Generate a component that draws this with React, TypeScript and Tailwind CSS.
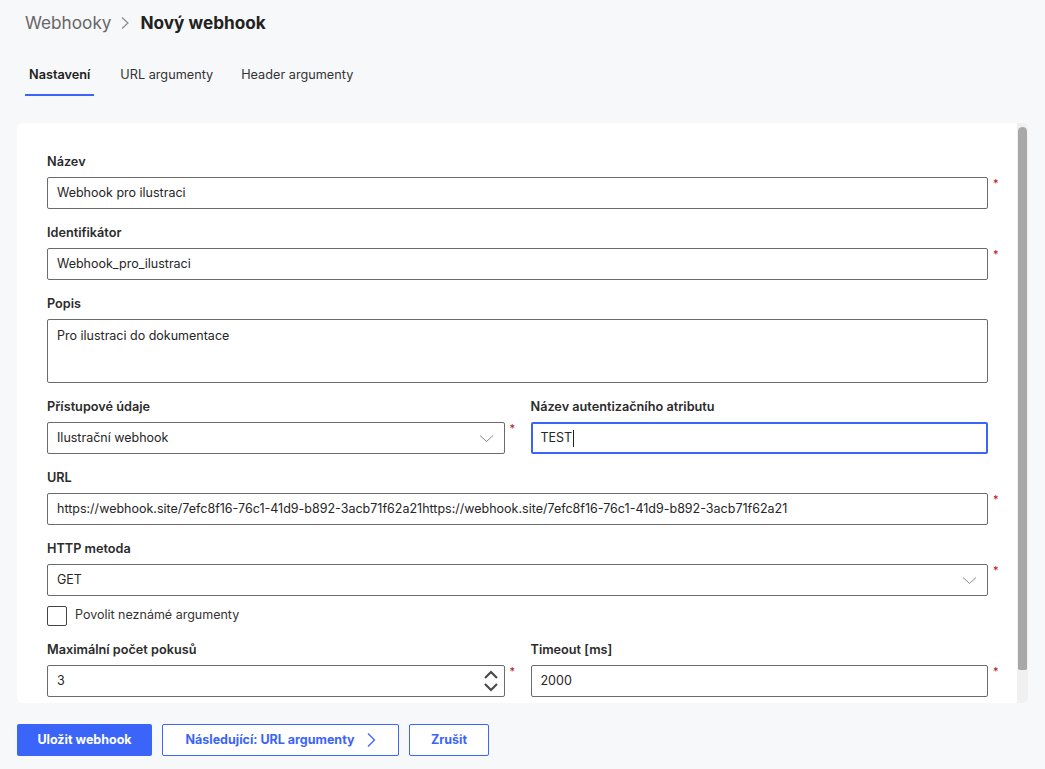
import React from "react";

const font = { fontFamily: "Inter, 'Noto Sans', sans-serif" };

function Req() {
  return (
    <span className="w-[26px] shrink-0 pl-[5px] pt-[1px] text-[11px] leading-[10px] text-[#b3101b] self-start">
      *
    </span>
  );
}

function Empty() {
  return <span className="w-[26px] shrink-0" />;
}

function Label({ children }: { children: React.ReactNode }) {
  return (
    <div className="h-4 mb-[7px] text-[12.7px] leading-4 font-semibold text-[#2b2b2b]">{children}</div>
  );
}

function ChevronDown() {
  return (
    <svg width="15" height="9" viewBox="0 0 15 9" className="shrink-0">
      <path d="M1 1.5 L7.5 7.5 L14 1.5" fill="none" stroke="#8a8a8a" strokeWidth="1" />
    </svg>
  );
}

function TextField({
  label,
  value,
  required = true,
}: {
  label: string;
  value: string;
  required?: boolean;
}) {
  return (
    <div className="flex flex-col">
      <Label>{label}</Label>
      <div className="flex">
        <div className="flex-1 h-8 border border-[#6b6b6b] rounded-[2px] flex items-center px-[9px] text-[12.5px] text-[#262626]">
          {value}
        </div>
        {required ? <Req /> : <Empty />}
      </div>
    </div>
  );
}

function SelectField({ label, value }: { label: string; value: string }) {
  return (
    <div className="flex flex-col">
      <Label>{label}</Label>
      <div className="flex">
        <div className="flex-1 h-8 border border-[#6b6b6b] rounded-[2px] flex items-center justify-between pl-[9px] pr-[10px] text-[12.5px] text-[#262626]">
          <span>{value}</span>
          <ChevronDown />
        </div>
        <Req />
      </div>
    </div>
  );
}

export default function App() {
  return (
    <div className="w-full h-[769px] bg-[#f7f8fa] overflow-hidden flex flex-col" style={font}>
      {/* breadcrumb */}
      <div className="h-[45px] flex items-center gap-[9px] px-[25px]">
        <span className="text-[17.2px] text-[#666666]">Webhooky</span>
        <svg width="10" height="14" viewBox="0 0 10 14" className="mr-[1px]">
          <path d="M2 1.5 L8 7 L2 12.5" fill="none" stroke="#8a8a8a" strokeWidth="1.2" />
        </svg>
        <span className="text-[17.2px] font-bold text-[#222222]">Nový webhook</span>
      </div>

      {/* tabs */}
      <div className="flex gap-[20px] px-[25px] mt-[11px] h-[40px]">
        <div className="px-1 border-b-2 border-[#3b64f8]">
          <span className="block pt-[9px] text-[12.7px] font-semibold text-[#222]">Nastavení</span>
        </div>
        <div className="px-1 pl-[6px]">
          <span className="block pt-[9px] text-[12.7px] text-[#333]">URL argumenty</span>
        </div>
        <div className="px-1">
          <span className="block pt-[9px] text-[12.7px] text-[#333]">Header argumenty</span>
        </div>
      </div>

      {/* form card */}
      <div className="mx-[17px] mt-[27px] h-[580px] bg-white rounded-[6px] overflow-hidden flex">
        <div className="flex-1 pl-[30px] pr-[3px] pt-[31px] flex flex-col gap-4">
          <TextField label="Název" value="Webhook pro ilustraci" />
          <TextField label="Identifikátor" value="Webhook_pro_ilustraci" />

          <div className="flex flex-col">
            <Label>Popis</Label>
            <div className="flex">
              <div className="flex-1 h-[64px] border border-[#6b6b6b] rounded-[2px] px-[9px] pt-[7px] text-[12.5px] text-[#262626]">
                Pro ilustraci do dokumentace
              </div>
              <Empty />
            </div>
          </div>

          <div className="grid grid-cols-2">
            <SelectField label="Přístupové údaje" value="Ilustrační webhook" />
            <div className="flex flex-col">
              <Label>Název autentizačního atributu</Label>
              <div className="flex">
                <div className="flex-1 h-8 border-2 border-[#3b64f8] rounded-[2px] flex items-center px-[8px] text-[12.5px] text-[#262626]">
                  TEST<span className="inline-block w-[1px] h-[17px] bg-[#222] ml-[1px]" />
                </div>
                <Empty />
              </div>
            </div>
          </div>

          <TextField
            label="URL"
            value="https://webhook.site/7efc8f16-76c1-41d9-b892-3acb71f62a21https://webhook.site/7efc8f16-76c1-41d9-b892-3acb71f62a21"
          />

          <div className="flex flex-col">
            <SelectField label="HTTP metoda" value="GET" />
            <div className="flex items-center mt-[9px] h-[21px]">
              <span className="w-[20px] h-[20px] border border-[#444] rounded-[2px] bg-white" />
              <span className="ml-[8px] text-[12.5px] text-[#333]">Povolit neznámé argumenty</span>
            </div>
          </div>

          <div className="grid grid-cols-2">
            <div className="flex flex-col">
              <Label>Maximální počet pokusů</Label>
              <div className="flex">
                <div className="flex-1 h-8 border border-[#6b6b6b] rounded-[2px] flex items-center justify-between pl-[9px] pr-[4px] text-[12.5px] text-[#262626]">
                  <span>3</span>
                  <svg width="18" height="26" viewBox="0 0 18 26">
                    <path d="M3 10 L9 4 L15 10" fill="none" stroke="#4a4a4a" strokeWidth="2.2" />
                    <path d="M3 16 L9 22 L15 16" fill="none" stroke="#4a4a4a" strokeWidth="2.2" />
                  </svg>
                </div>
                <Req />
              </div>
            </div>
            <TextField label="Timeout [ms]" value="2000" />
          </div>
        </div>

        {/* scrollbar */}
        <div className="w-[11px] bg-[#f0f0f0] shrink-0 pt-[4px] pb-[33px] px-[1px]">
          <div className="h-full bg-[#a8a8a8] rounded-t-[5px] rounded-b-[2px]" />
        </div>
      </div>

      {/* actions */}
      <div className="flex gap-[10px] px-[17px] mt-[21px]">
        <button className="h-8 w-[135px] rounded-[2px] bg-[#3b64f8] text-white text-[12.5px] font-bold">
          Uložit webhook
        </button>
        <button className="h-8 w-[237px] rounded-[2px] border border-[#3b64f8] bg-white text-[#3b64f8] text-[12.5px] font-bold flex items-center justify-center gap-[11px]">
          <span>Následující: URL argumenty</span>
          <svg width="10" height="16" viewBox="0 0 10 16">
            <path d="M2 1.5 L8.5 8 L2 14.5" fill="none" stroke="#3b64f8" strokeWidth="1.3" />
          </svg>
        </button>
        <button className="h-8 w-[80px] rounded-[2px] border border-[#3b64f8] bg-white text-[#3b64f8] text-[12.5px] font-bold">
          Zrušit
        </button>
      </div>
    </div>
  );
}
